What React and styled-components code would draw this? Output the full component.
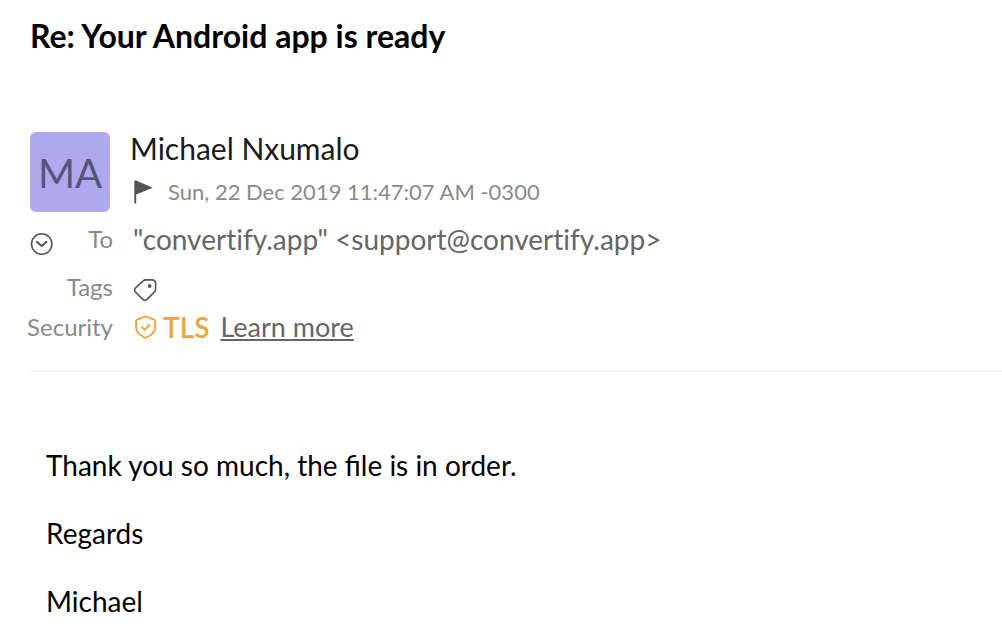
import React from "react";
import styled, { createGlobalStyle } from "styled-components";

const GlobalStyle = createGlobalStyle`
  *, *::before, *::after { box-sizing: border-box; }
  body {
    margin: 0;
    background: #fff;
    color: #000;
    font-family: Lato, "Liberation Sans", sans-serif;
  }
`;

const Page = styled.main`
  padding-top: 16px;
`;

const Subject = styled.h1`
  margin: 0;
  padding: 0 30px;
  font-size: 32px;
  line-height: 40px;
  font-weight: 700;
`;

const Sender = styled.header`
  display: flex;
  gap: 20px;
  padding: 76px 30px 0;
`;

const Avatar = styled.div`
  display: flex;
  align-items: center;
  justify-content: center;
  flex: none;
  width: 80px;
  height: 80px;
  padding-top: 2px;
  border-radius: 6px;
  background: #aea9ee;
  color: #585579;
  font-size: 40px;
  line-height: 48px;
`;

const SenderName = styled.div`
  font-size: 30px;
  line-height: 32px;
  color: #1b1b1b;
`;

const DateRow = styled.div`
  display: flex;
  align-items: center;
  gap: 12px;
  margin-top: 10px;
  padding-left: 2px;
  font-size: 22px;
  line-height: 36px;
  color: #8a8a8a;
`;

const Icon = styled.svg`
  display: block;
  flex: none;
  width: 24px;
  height: 24px;
`;

const IconButton = styled.button`
  display: block;
  padding: 0;
  border: 0;
  background: none;
  color: #555;
  cursor: pointer;
`;

const Details = styled.dl`
  display: grid;
  grid-template-columns: 87px 1fr;
  column-gap: 20px;
  row-gap: 4px;
  margin: 0;
  padding: 9px 30px 0 26px;
`;

const Label = styled.dt`
  display: flex;
  align-items: center;
  justify-content: ${(p) => (p.$spread ? "space-between" : "flex-end")};
  height: 36px;
  padding-left: ${(p) => (p.$spread ? "4px" : "0")};
  font-size: 24px;
  line-height: 36px;
  color: #8a8a8a;

  ${IconButton} { margin-top: 10px; }
`;

const Value = styled.dd`
  display: flex;
  align-items: center;
  min-height: 36px;
  margin: 0 0 ${(p) => (p.$spaced ? "8px" : "0")};
  font-size: 28px;
  line-height: 36px;
  font-variant-ligatures: none;
  color: #666;

  > ${IconButton} { margin-top: 6px; }
`;

const Protocol = styled.span`
  display: flex;
  align-items: center;
  gap: 6px;
  margin-right: 11px;
  font-weight: 600;
  color: #f1a43c;
`;

const LearnMore = styled.a`
  font-size: 27px;
  color: #666;
  text-decoration: underline;
`;

const Divider = styled.hr`
  height: 2px;
  margin: 25px 0 0 30px;
  border: 0;
  background: #f3f3f3;
`;

const Message = styled.article`
  padding: 76px 46px 0;
  font-size: 28px;
  line-height: 34px;

  p { margin: 0 0 34px; }
  p:last-child { margin-bottom: 0; }
`;

export default function App() {
  return (
    <>
      <GlobalStyle />
      <Page>
        <Subject>Re: Your Android app is ready</Subject>
        <Sender>
          <Avatar>MA</Avatar>
          <div>
            <SenderName>Michael Nxumalo</SenderName>
            <DateRow>
              <IconButton aria-label="Flag message">
                <Icon viewBox="0 0 24 24" fill="currentColor">
                  <path d="M2.3 0.5H4.2L20.8 7.8L4.2 14.6V23.6H2.3Z" />
                </Icon>
              </IconButton>
              <time dateTime="2019-12-22T11:47:07-03:00">Sun, 22 Dec 2019 11:47:07 AM -0300</time>
            </DateRow>
          </div>
        </Sender>
        <Details>
          <Label $spread>
            <IconButton aria-label="Show details">
              <Icon viewBox="0 0 24 24" fill="none" stroke="currentColor">
                <circle cx="11.7" cy="12" r="10.2" strokeWidth="1.6" />
                <path d="M7 10L11.7 14L16.4 10" strokeWidth="2.2" strokeLinecap="round" strokeLinejoin="round" />
              </Icon>
            </IconButton>
            To
          </Label>
          <Value $spaced>"convertify.app" &lt;support@convertify.app&gt;</Value>
          <Label>Tags</Label>
          <Value>
            <IconButton aria-label="Add tag">
              <Icon viewBox="0 0 24 24" fill="none" stroke="currentColor">
                <path d="M13 1.9H18.8Q22.6 1.9 22.6 5.6V11.2Q22.6 12.8 21.5 13.9L14.3 21.1Q11.9 23.5 9.5 21.1L2.8 14.3Q0.4 11.9 2.8 9.6L9.9 3.1Q11.2 1.9 13 1.9Z" strokeWidth="1.6" strokeLinejoin="round" />
                <circle cx="16.6" cy="8" r="1.9" fill="currentColor" stroke="none" />
              </Icon>
            </IconButton>
          </Value>
          <Label>Security</Label>
          <Value>
            <Protocol>
              <Icon viewBox="0 0 24 24" fill="none" stroke="currentColor" strokeLinecap="round" strokeLinejoin="round" aria-hidden="true">
                <path d="M12.7 1.3L21.2 4.6Q22.2 5 22.2 6V12.5C22.2 17.5 17.5 20.8 12.7 23C7.9 20.8 3.1 17.5 3.1 12.5V6Q3.1 5 4.1 4.6Z" strokeWidth="1.9" />
                <path d="M9 12.2L11.7 14.8L16.4 10" strokeWidth="2" />
              </Icon>
              TLS
            </Protocol>
            <LearnMore href="#security">Learn more</LearnMore>
          </Value>
        </Details>
        <Divider />
        <Message>
          <p>Thank you so much, the file is in order.</p>
          <p>Regards</p>
          <p>Michael</p>
        </Message>
      </Page>
    </>
  );
}
